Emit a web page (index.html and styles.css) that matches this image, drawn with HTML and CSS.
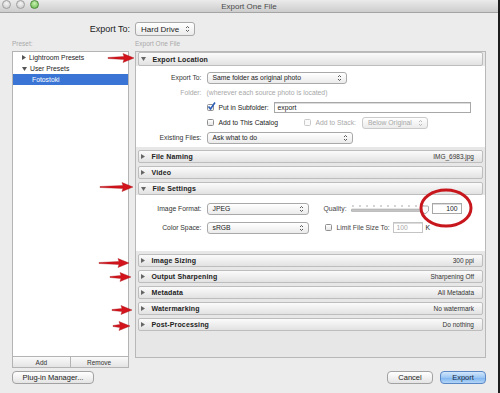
FILE: index.html
```html
<!DOCTYPE html>
<html lang="en">
<head>
  <meta charset="UTF-8" />
  <title>Export One File</title>
  <link rel="stylesheet" href="styles.css">
</head>
<body>
  <div class="window">
    <div class="titlebar">
      <div class="lights">
        <span class="light"></span>
        <span class="light"></span>
        <span class="light green"></span>
      </div>
      <div class="title">Export One File</div>
      <div></div>
    </div>

    <div class="export-to">
      <span class="label">Export To:</span>
      <div class="popup big">Hard Drive
        <svg class="stepper" width="5" height="8" viewBox="0 0 5 8"><path d="M1 3 L2.5 1.5 L4 3 M1 5 L2.5 6.5 L4 5" /></svg>
      </div>
    </div>

    <div class="captions">
      <span class="preset-caption">Preset:</span>
      <span>Export One File</span>
    </div>

    <div class="main">
      <div class="presets">
        <div class="preset-list">
          <div class="item"><svg class="tri" width="4" height="5" viewBox="0 0 4 5"><path d="M0 0 L4 2.5 L0 5 Z" /></svg>Lightroom Presets</div>
          <div class="item"><svg class="tri" width="5" height="4" viewBox="0 0 5 4"><path d="M0 0 L5 0 L2.5 4 Z" /></svg>User Presets</div>
          <div class="item selected">Fotostoki</div>
        </div>
        <div class="preset-buttons">
          <button>Add</button>
          <button>Remove</button>
        </div>
      </div>

      <div class="panel">
        <div class="sec-head first">
          <svg class="tri" width="5" height="4" viewBox="0 0 5 4"><path d="M0 0 L5 0 L2.5 4 Z" /></svg>
          <span class="name">Export Location</span>
        </div>
        <div class="sec-body location">
          <div class="row">
            <span class="lbl">Export To:</span>
            <div class="popup w140">Same folder as original photo
              <svg class="stepper" width="5" height="8" viewBox="0 0 5 8"><path d="M1 3 L2.5 1.5 L4 3 M1 5 L2.5 6.5 L4 5" /></svg>
            </div>
          </div>
          <div class="row muted">
            <span class="lbl">Folder:</span>
            <span>(wherever each source photo is located)</span>
          </div>
          <div class="row">
            <span class="lbl"></span>
            <label class="opt w67"><span class="check on"><svg width="9" height="9" viewBox="0 0 9 9"><path d="M1.5 4.5 L3.5 7 L8 0.5" /></svg></span>Put in Subfolder:</label>
            <div class="field w197">export</div>
          </div>
          <div class="row">
            <span class="lbl"></span>
            <label class="opt w97"><span class="check"></span>Add to This Catalog</label>
            <label class="opt muted"><span class="check off"></span>Add to Stack:</label>
            <div class="popup w66 off">Below Original
              <svg class="stepper" width="5" height="8" viewBox="0 0 5 8"><path d="M1 3 L2.5 1.5 L4 3 M1 5 L2.5 6.5 L4 5" /></svg>
            </div>
          </div>
          <div class="row">
            <span class="lbl">Existing Files:</span>
            <div class="popup w146">Ask what to do
              <svg class="stepper" width="5" height="8" viewBox="0 0 5 8"><path d="M1 3 L2.5 1.5 L4 3 M1 5 L2.5 6.5 L4 5" /></svg>
            </div>
          </div>
        </div>

        <div class="sec-head">
          <svg class="tri" width="4" height="5" viewBox="0 0 4 5"><path d="M0 0 L4 2.5 L0 5 Z" /></svg>
          <span class="name">File Naming</span>
          <span class="value">IMG_6983.jpg</span>
        </div>
        <div class="sec-head">
          <svg class="tri" width="4" height="5" viewBox="0 0 4 5"><path d="M0 0 L4 2.5 L0 5 Z" /></svg>
          <span class="name">Video</span>
        </div>
        <div class="sec-head">
          <svg class="tri" width="5" height="4" viewBox="0 0 5 4"><path d="M0 0 L5 0 L2.5 4 Z" /></svg>
          <span class="name">File Settings</span>
        </div>
        <div class="sec-body settings">
          <div class="row tall">
            <span class="lbl">Image Format:</span>
            <div class="popup w102">JPEG
              <svg class="stepper" width="5" height="8" viewBox="0 0 5 8"><path d="M1 3 L2.5 1.5 L4 3 M1 5 L2.5 6.5 L4 5" /></svg>
            </div>
            <span class="quality">Quality:</span>
            <svg class="slider" width="78" height="12" viewBox="0 0 78 12">
              <g class="ticks">
                <path d="M2 2v2M9 2v2M16 2v2M23 2v2M30 2v2M37 2v2M44 2v2M51 2v2M58 2v2M65 2v2M72 2v2" />
              </g>
              <rect x="0" y="6" width="76" height="2.5" rx="1.2" fill="#c4c4c4" stroke="#9a9a9a" stroke-width="0.5" />
              <path d="M71.5 3 h5 a1 1 0 0 1 1 1 v4 l-3.5 3 l-3.5 -3 v-4 a1 1 0 0 1 1 -1 z" fill="#fafafa" stroke="#8a8a8a" stroke-width="0.7" />
            </svg>
            <div class="field num w30">100</div>
          </div>
          <div class="row tall">
            <span class="lbl">Color Space:</span>
            <div class="popup w102">sRGB
              <svg class="stepper" width="5" height="8" viewBox="0 0 5 8"><path d="M1 3 L2.5 1.5 L4 3 M1 5 L2.5 6.5 L4 5" /></svg>
            </div>
            <label class="opt limit"><span class="check"></span>Limit File Size To:</label>
            <div class="field w30 off">100</div>
            <span class="unit">K</span>
          </div>
        </div>

        <div class="sec-head">
          <svg class="tri" width="4" height="5" viewBox="0 0 4 5"><path d="M0 0 L4 2.5 L0 5 Z" /></svg>
          <span class="name">Image Sizing</span>
          <span class="value">300 ppi</span>
        </div>
        <div class="sec-head">
          <svg class="tri" width="4" height="5" viewBox="0 0 4 5"><path d="M0 0 L4 2.5 L0 5 Z" /></svg>
          <span class="name">Output Sharpening</span>
          <span class="value">Sharpening Off</span>
        </div>
        <div class="sec-head">
          <svg class="tri" width="4" height="5" viewBox="0 0 4 5"><path d="M0 0 L4 2.5 L0 5 Z" /></svg>
          <span class="name">Metadata</span>
          <span class="value">All Metadata</span>
        </div>
        <div class="sec-head">
          <svg class="tri" width="4" height="5" viewBox="0 0 4 5"><path d="M0 0 L4 2.5 L0 5 Z" /></svg>
          <span class="name">Watermarking</span>
          <span class="value">No watermark</span>
        </div>
        <div class="sec-head">
          <svg class="tri" width="4" height="5" viewBox="0 0 4 5"><path d="M0 0 L4 2.5 L0 5 Z" /></svg>
          <span class="name">Post-Processing</span>
          <span class="value">Do nothing</span>
        </div>
      </div>
    </div>

    <div class="footer">
      <button class="btn plugin">Plug-in Manager...</button>
      <span class="spacer"></span>
      <button class="btn">Cancel</button>
      <button class="btn default">Export</button>
    </div>

    <!-- red annotations drawn over the dialog -->
    <svg class="marks" width="500" height="393" viewBox="0 0 500 393">
      <g class="arrows">
        <polygon points="108,57.5 124,56.5 123,53.5 134,58 123,62.5 124,59.5 108,58.5" />
        <polygon points="100,186.5 123,185.5 122,182.5 133,187 122,191.5 123,188.5 100,187.5" />
        <polygon points="99,262.5 119,261.5 118,258.5 129,263 118,267.5 119,264.5 99,263.5" />
        <polygon points="110,276.5 121,275.5 120,272.5 131,277 120,281.5 121,278.5 110,277.5" />
        <polygon points="112,309.5 122,308.5 121,305.5 132,310 121,314.5 122,311.5 112,310.5" />
        <polygon points="113,325.5 120,324.5 119,321.5 130,326 119,330.5 120,327.5 113,326.5" />
      </g>
      <ellipse cx="446" cy="208" rx="25" ry="18" fill="none" stroke="#c8161d" stroke-width="3" />
    </svg>
  </div>
</body>
</html>
```

FILE: styles.css
```css
body { margin: 0; font-family: "Liberation Sans", Arial, sans-serif; }
.window { width: 500px; height: 393px; background: #ececec; position: relative; overflow: hidden; border-right: 2px solid #1c1c1c; box-sizing: border-box; color: #222; }

.titlebar { height: 12px; display: grid; grid-template-columns: 1fr auto 1fr; align-items: center; background: linear-gradient(#ebebeb, #cdcdcd); border-bottom: 1px solid #a4a4a4; }
.lights { display: flex; gap: 5px; padding-left: 2px; margin-top: -3px; }
.light { width: 7px; height: 7px; border-radius: 50%; border: 1px solid #9d9d9d; background: radial-gradient(circle at 50% 35%, #f4f4f4, #c6c6c6); }
.light.green { border-color: #4f8a3d; background: radial-gradient(circle at 50% 35%, #c9f2b2, #5fb446); }
.title { font-size: 8px; color: #4a4a4a; }

.export-to { display: flex; align-items: center; margin-top: 9px; height: 14px; }
.export-to .label { width: 135px; padding-right: 5px; box-sizing: border-box; text-align: right; font-size: 9px; }

.popup { display: flex; align-items: center; justify-content: space-between; height: 12px; box-sizing: border-box; border: 1px solid #a9a9a9; border-radius: 3px; background: linear-gradient(#ffffff, #ebebeb); padding: 0 4px 0 5px; font-size: 6.8px; color: #222; }
.popup.big { width: 60px; height: 14px; font-size: 8px; }
.popup.off { color: #a8a8a8; border-color: #cacaca; }
.stepper path { fill: none; stroke: #333; stroke-width: 0.8; }
.popup.off .stepper path { stroke: #aaa; }

.captions { display: flex; margin-top: 4px; padding-left: 12px; height: 11px; font-size: 6.5px; color: #a9a9a9; }
.preset-caption { width: 123px; }

.main { display: flex; gap: 6px; padding: 0 12px; }
.presets { width: 117px; display: flex; flex-direction: column; }
.preset-list { height: 306px; background: #fff; border: 1px solid #b4b4b4; box-sizing: border-box; }
.item { height: 11px; display: flex; align-items: center; padding-left: 9px; font-size: 6.8px; }
.item .tri { margin-right: 3px; fill: #555; }
.item.selected { background: #3a75d6; color: #fff; padding-left: 19px; }
.preset-buttons { display: flex; height: 11px; }
.preset-buttons button { flex: 1; margin: 0; padding: 0; border: 1px solid #b4b4b4; border-top: none; background: linear-gradient(#fafafa, #e4e4e4); font-family: inherit; font-size: 6.5px; color: #333; }
.preset-buttons button + button { border-left: none; }

.panel { width: 353px; height: 307px; box-sizing: border-box; border: 1px solid #b8b8b8; background: #e7e7e7; }
.sec-head { height: 13px; margin: 3px 2px 0; box-sizing: border-box; border: 1px solid #bdbdbd; border-radius: 2px; background: linear-gradient(#fbfbfb, #e2e2e2); display: flex; align-items: center; padding: 0 8px 0 2px; font-size: 7px; }
.sec-head.first { margin-top: 0; height: 14px; }
.sec-head .tri { margin-right: 7px; fill: #666; }
.sec-head .name { font-weight: bold; color: #222; letter-spacing: 0.15px; }
.sec-head .value { margin-left: auto; font-size: 6.5px; color: #333; }

.sec-body { background: #fff; }
.sec-body.location { padding: 4px 0 2px; }
.sec-body.settings { height: 56px; box-sizing: border-box; padding-top: 5px; display: flex; flex-direction: column; gap: 2px; }
.row { display: flex; align-items: center; height: 15px; font-size: 6.8px; }
.row.tall { height: 17px; }
.row .lbl { width: 71px; flex-shrink: 0; padding-right: 5px; box-sizing: border-box; text-align: right; color: #333; }
.row.muted, .opt.muted { color: #a8a8a8; }
.row.muted .lbl { color: #a8a8a8; }

.opt { display: flex; align-items: center; color: #222; }
.check { width: 7px; height: 7px; box-sizing: border-box; border: 1px solid #8f8f8f; border-radius: 1.5px; background: linear-gradient(#ffffff, #e6e6e6); margin-right: 5px; position: relative; }
.check.off { border-color: #c9c9c9; background: #fafafa; }
.check svg { position: absolute; left: -1px; top: -3px; }
.check svg path { fill: none; stroke: #2b5fb8; stroke-width: 1.6; }
.opt.w67 { width: 67px; }
.opt.w97 { width: 97px; }
.opt.muted { margin-right: 6px; }

.field { height: 11px; box-sizing: border-box; border: 1px solid #a8a8a8; box-shadow: inset 0 1px 0 #dcdcdc; background: #fff; display: flex; align-items: center; padding: 0 3px; font-size: 6.8px; color: #222; }
.field.num { justify-content: flex-end; }
.field.off { color: #aaa; border-color: #c4c4c4; }

.w30 { width: 30px; }
.w66 { width: 66px; }
.w102 { width: 102px; }
.w140 { width: 140px; }
.w146 { width: 146px; }
.w197 { width: 197px; }

.quality { margin-left: 15px; color: #444; }
.slider { margin-left: 4px; margin-right: 3px; }
.slider .ticks path { stroke: #888; stroke-width: 0.7; }
.limit { margin-left: 16px; width: 68px; color: #444; }
.unit { margin-left: 3px; }

.footer { display: flex; align-items: center; padding: 0 12px; margin-top: 3px; gap: 7px; }
.footer .spacer { flex: 1; }
.btn { height: 13px; width: 46px; margin: 0; padding: 0; border: 1px solid #a2a2a2; border-radius: 4px; background: linear-gradient(#ffffff, #e4e4e4); font-family: inherit; font-size: 7.5px; color: #222; }
.btn.plugin { width: 82px; }
.btn.default { border-color: #5b87c5; background: linear-gradient(#d3e7fb, #9cc7f4 50%, #7cb3ef 51%, #b3d6f7); color: #1a2a40; }

.marks { position: absolute; left: 0; top: 0; pointer-events: none; }
.arrows polygon { fill: #d3141c; stroke: #a30d12; stroke-width: 0.4; }
```
